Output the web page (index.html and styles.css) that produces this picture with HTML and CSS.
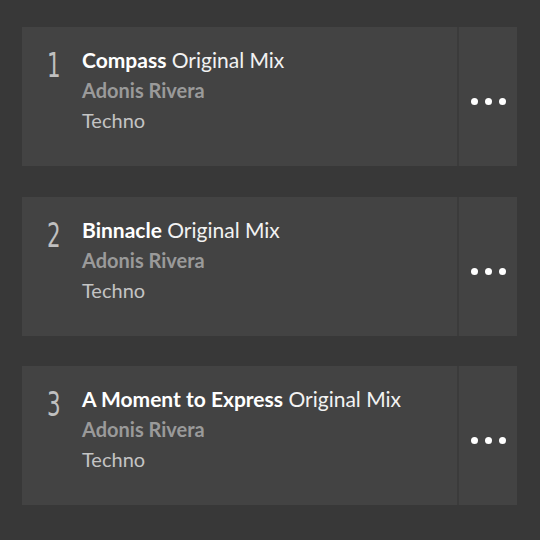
FILE: index.html
```html
<!DOCTYPE html>
<html>
<head>
<meta charset="utf-8">
<link rel="stylesheet" href="styles.css">
</head>
<body>
<div class="list">
  <div class="track">
    <div class="main">
      <div class="num"><span>1</span></div>
      <div class="info">
        <div class="title"><b>Compass</b> Original Mix</div>
        <div class="artist">Adonis Rivera</div>
        <div class="genre">Techno</div>
      </div>
    </div>
    <div class="more"><span></span><span></span><span></span></div>
  </div>
  <div class="track">
    <div class="main">
      <div class="num"><span>2</span></div>
      <div class="info">
        <div class="title"><b>Binnacle</b> Original Mix</div>
        <div class="artist">Adonis Rivera</div>
        <div class="genre">Techno</div>
      </div>
    </div>
    <div class="more"><span></span><span></span><span></span></div>
  </div>
  <div class="track">
    <div class="main">
      <div class="num"><span>3</span></div>
      <div class="info">
        <div class="title"><b>A Moment to Express</b> Original Mix</div>
        <div class="artist">Adonis Rivera</div>
        <div class="genre">Techno</div>
      </div>
    </div>
    <div class="more"><span></span><span></span><span></span></div>
  </div>
</div>
</body>
</html>
```
FILE: styles.css
```css
html, body {
  margin: 0;
  padding: 0;
  background: #383838;
  width: 540px;
  height: 540px;
  overflow: hidden;
}
body {
  font-family: Lato, "Open Sans", sans-serif;
}
.list {
  display: flex;
  flex-direction: column;
  gap: 30.5px;
  padding: 27px 23px 0 22px;
}
.track {
  display: flex;
  height: 139px;
  background: #434343;
}
.main {
  flex: 1;
  display: flex;
  border-right: 2px solid #3b3b3b;
}
.num {
  width: 60px;
  box-sizing: border-box;
  padding-left: 25px;
  padding-top: 19px;
  font-family: "DejaVu Sans Condensed", "DejaVu Sans", sans-serif;
  font-weight: 200;
  font-size: 33px;
  color: #c0c0c0;
}
.num span {
  display: inline-block;
  transform: scaleX(0.72);
  transform-origin: left top;
}
.info {
  padding-top: 18px;
  display: flex;
  flex-direction: column;
}
.title {
  font-size: 21px;
  line-height: 30px;
  color: #f2f2f2;
}
.title b {
  font-weight: 700;
  color: #ffffff;
}
.artist {
  font-size: 20px;
  line-height: 30px;
  font-weight: 700;
  color: #9a9a9a;
}
.genre {
  font-size: 20px;
  line-height: 30px;
  color: #c4c4c4;
}
.more {
  width: 58px;
  display: flex;
  align-items: center;
  justify-content: center;
  gap: 7px;
  padding-top: 10px;
}
.more span {
  width: 7px;
  height: 7px;
  border-radius: 50%;
  background: #fff;
}
```
